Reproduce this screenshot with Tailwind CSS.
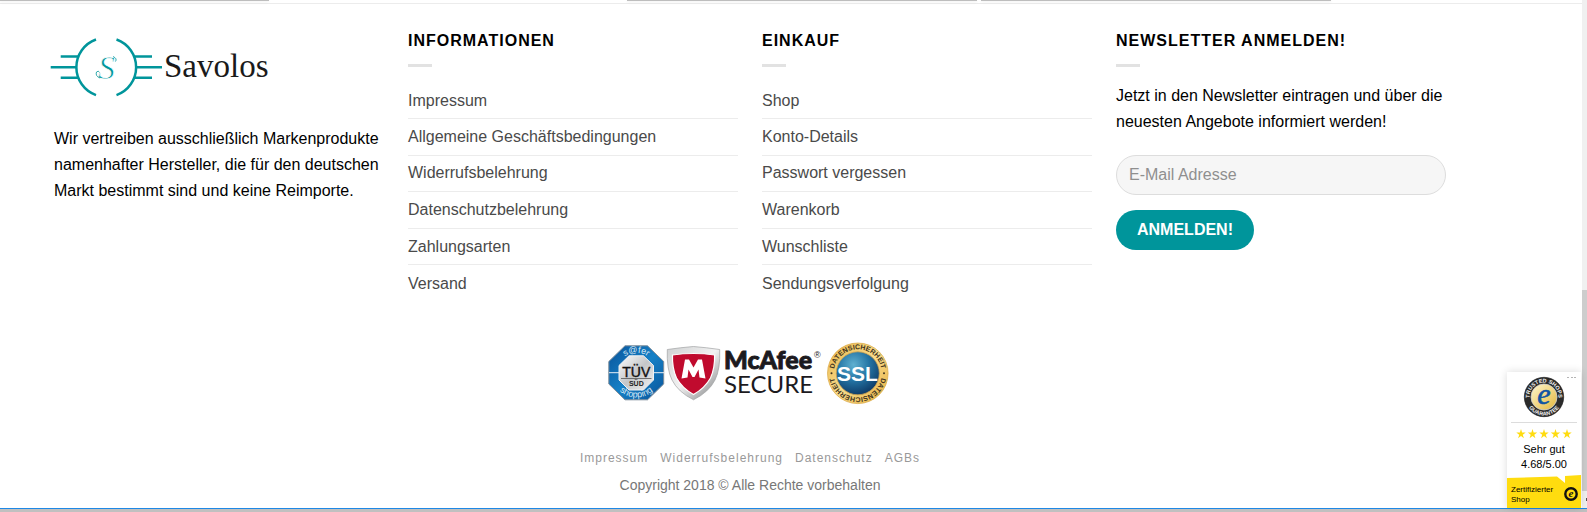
<!DOCTYPE html>
<html lang="de">
<head>
  <meta charset="UTF-8" />
  <title>Savolos</title>
  <meta name="viewport" content="width=device-width, initial-scale=1.0" />
  <script src="https://cdn.jsdelivr.net/npm/@tailwindcss/browser@4"></script>
</head>
<body class="bg-white font-['Liberation_Sans',Arial,sans-serif] text-base text-black">

  <div class="relative flex">
    <div class="min-w-0 flex-1">

      <!-- lower edges of the product cards -->
      <div class="flex h-[3px] gap-1">
        <div class="h-px flex-[269] bg-[#bdbdbd] shadow-sm"></div>
        <div class="flex-[350]"></div>
        <div class="h-px flex-[350] bg-[#bdbdbd] shadow-sm"></div>
        <div class="h-px flex-[350] bg-[#bdbdbd] shadow-sm"></div>
        <div class="flex-[247]"></div>
      </div>

      <footer class="border-t border-[#ececec] pt-6 pr-[136px] pb-[11px] pl-[54px]">
        <div class="grid grid-cols-4 gap-6">

          <div class="pt-2">
            <a href="#" aria-label="Savolos" class="-ml-1 block">
              <svg width="220" height="62" viewBox="50 36 220 62" fill="none">
                <g stroke="#00959b" stroke-width="2.5">
                  <path d="M96 39.5A29.5 29.5 0 0 0 96 95.1" />
                  <path d="M116.500 39.500A29.500 29.500 0 0 1 116.500 95.100" />
                  <path d="M60.700 56.500H79M50.700 67.300H77M60.700 77.700H79M134 56.500H152M136 67.300H162M134 77.700H152" />
                </g>
                <text x="98" y="79" font-family="Liberation Serif, serif" font-style="italic" font-size="34" fill="#00959b" stroke="#fff" stroke-width=".8">S</text>
                <path d="M113 56.500Q117.500 58.500 115.500 61.500M100 78Q95 76 96.500 72Q98.500 70 99.500 72.500" stroke="#00959b" stroke-width=".8" />
                <text x="164" y="77" font-family="Liberation Serif, serif" font-size="33" fill="#1a1a1a">Savolos</text>
              </svg>
            </a>
            <p class="mt-7 leading-[26px]">Wir vertreiben ausschließlich Markenprodukte namenhafter Hersteller, die für den deutschen Markt bestimmt sind und keine Reimporte.</p>
          </div>

          <div>
            <h2 class="font-bold leading-[26px] tracking-[1px]">INFORMATIONEN</h2>
            <div class="mt-2.5 h-[3px] w-6 bg-[#e2e2e2]"></div>
            <ul class="mt-4 grid h-[219px] grid-rows-[36px_repeat(5,1fr)] divide-y divide-[#ececec] text-[#4a4a4a] [&>li]:flex [&>li]:items-center">
              <li><a href="#">Impressum</a></li>
              <li><a href="#">Allgemeine Geschäftsbedingungen</a></li>
              <li><a href="#">Widerrufsbelehrung</a></li>
              <li><a href="#">Datenschutzbelehrung</a></li>
              <li><a href="#">Zahlungsarten</a></li>
              <li><a href="#">Versand</a></li>
            </ul>
          </div>

          <div>
            <h2 class="font-bold leading-[26px] tracking-[1px]">EINKAUF</h2>
            <div class="mt-2.5 h-[3px] w-6 bg-[#e2e2e2]"></div>
            <ul class="mt-4 grid h-[219px] grid-rows-[36px_repeat(5,1fr)] divide-y divide-[#ececec] text-[#4a4a4a] [&>li]:flex [&>li]:items-center">
              <li><a href="#">Shop</a></li>
              <li><a href="#">Konto-Details</a></li>
              <li><a href="#">Passwort vergessen</a></li>
              <li><a href="#">Warenkorb</a></li>
              <li><a href="#">Wunschliste</a></li>
              <li><a href="#">Sendungsverfolgung</a></li>
            </ul>
          </div>

          <div>
            <h2 class="font-bold leading-[26px] tracking-[1px]">NEWSLETTER ANMELDEN!</h2>
            <div class="mt-2.5 h-[3px] w-6 bg-[#e2e2e2]"></div>
            <p class="mt-4 leading-[26px]">Jetzt in den Newsletter eintragen und über die neuesten Angebote informiert werden!</p>
            <form class="mt-5">
              <input type="email" aria-label="E-Mail Adresse" placeholder="E-Mail Adresse" class="block h-10 w-full rounded-full border border-[#dddddd] bg-[#f6f6f6] px-3 placeholder:text-[#8f8f8f]" />
              <button type="submit" class="mt-[15px] block h-10 rounded-full bg-[#00959b] px-[21px] font-bold text-white">ANMELDEN!</button>
            </form>
          </div>
        </div>

        <svg class="mx-auto mt-[39px] block" width="286" height="64" viewBox="607 341 286 64">
          <defs>
            <linearGradient id="blue" x1="0" y1="0" x2="1" y2="1">
              <stop offset="0" stop-color="#0a5399" />
              <stop offset=".5" stop-color="#1580c6" />
              <stop offset="1" stop-color="#0a5399" />
            </linearGradient>
            <linearGradient id="silver" x1="0" y1="0" x2="1" y2="1">
              <stop offset="0" stop-color="#fdfdfd" />
              <stop offset=".5" stop-color="#c4c6c8" />
              <stop offset="1" stop-color="#f4f4f4" />
            </linearGradient>
            <linearGradient id="steel" x1="0" y1="0" x2="1" y2="1">
              <stop offset="0" stop-color="#cfd1d2" />
              <stop offset=".5" stop-color="#f2f2f2" />
              <stop offset="1" stop-color="#77797b" />
            </linearGradient>
            <linearGradient id="gold" x1="0" y1="0" x2="1" y2="1">
              <stop offset="0" stop-color="#e9b548" />
              <stop offset=".5" stop-color="#f8dc8c" />
              <stop offset="1" stop-color="#e5ad3d" />
            </linearGradient>
            <radialGradient id="ball" cx=".4" cy=".3" r=".75">
              <stop offset="0" stop-color="#5fb0d0" />
              <stop offset=".5" stop-color="#2373a3" />
              <stop offset="1" stop-color="#0c3561" />
            </radialGradient>
            <path id="tuvTop" d="M616.300 372.700A20 20 0 0 1 656.300 372.700" />
            <path id="tuvBottom" d="M611.500 372.700A24.800 24.800 0 0 0 661.100 372.700" />
            <path id="sslTop" d="M833.800 373.300A24 24 0 0 1 881.800 373.300" />
            <path id="sslBottom" d="M881.800 373.300A24 24 0 0 1 833.800 373.300" />
          </defs>

          <!-- TÜV SÜD -->
          <path d="M625 345.800H647.500L663.700 361.500V384L647.500 399.800H625L608.800 384V361.500Z" fill="url(#blue)" stroke="#7f8d99" stroke-width="1" />
          <path d="M609 372.700H664" stroke="#e6eef5" stroke-width="1" />
          <path d="M629 355.800H643.500L653.500 365.500V380L643.500 390H629L619 380V365.500Z" fill="url(#silver)" stroke="#eef1f4" stroke-width="1" />
          <text x="636.300" y="376.500" text-anchor="middle" font-family="Liberation Sans" font-size="14" fill="#111" stroke="#111" stroke-width=".4">TÜV</text>
          <path d="M621 378.500H651.500" stroke="#555" stroke-width=".8" />
          <text x="636.300" y="386" text-anchor="middle" font-family="Liberation Sans" font-weight="bold" font-size="7" fill="#222">SÜD</text>
          <g font-family="Liberation Sans" font-size="9" fill="#d5e8f6" text-anchor="middle">
            <text><textPath href="#tuvTop" startOffset="50%">s@fer</textPath></text>
            <text><textPath href="#tuvBottom" startOffset="50%">shopping</textPath></text>
          </g>

          <!-- McAfee SECURE -->
          <path d="M667.300 349.500Q681 347.500 693.500 346.500Q706 347.500 719.700 349.500Q720.500 369 715 380Q709 392 693.500 399.800Q678 392 672 380Q666.500 369 667.300 349.500Z" fill="url(#steel)" stroke="#a0a2a4" stroke-width=".7" />
          <path d="M672.500 355Q682 353.500 693.500 353.500Q705 353.500 714.600 355Q715 368 710.500 378Q705 388 693.500 394.500Q682 388 676.500 378Q672 368 672.500 355Z" fill="#c00b2e" stroke="#fff" stroke-width="1.200" />
          <path d="M681.500 378.500L685 359.500L689 359.500L693.500 367.500L698 359.500L702 359.500L705.500 378.500L699.500 377.500L698.500 369.500L694.500 377H692.500L688.500 369.500L687.500 377.500Z" fill="#fff" />
          <text x="724" y="369" font-family="Lato, sans-serif" font-weight="900" font-size="25" fill="#1c1a1e" stroke="#1c1a1e" stroke-width=".9">McAfee</text>
          <text x="814" y="358" font-family="Liberation Sans" font-size="9" fill="#1c1a1e">®</text>
          <text x="724" y="393" font-family="Lato, sans-serif" font-size="24" fill="#1c1a1e">SECURE</text>

          <!-- SSL -->
          <circle cx="857.800" cy="373.300" r="30.300" fill="url(#gold)" stroke="#d9a640" stroke-width=".7" />
          <circle cx="857.800" cy="373.300" r="21.500" fill="url(#ball)" stroke="#c9a050" stroke-width=".8" />
          <g font-family="Liberation Sans" font-weight="bold" font-size="7" fill="#3f3420" text-anchor="middle">
            <text><textPath href="#sslTop" startOffset="50%">DATENSICHERHEIT</textPath></text>
            <text><textPath href="#sslBottom" startOffset="50%">DATENSICHERHEIT</textPath></text>
          </g>
          <circle cx="831.500" cy="373.300" r="1" fill="#3f3420" />
          <circle cx="884" cy="373.300" r="1" fill="#3f3420" />
          <text x="857.500" y="380.800" text-anchor="middle" font-family="Liberation Sans" font-weight="bold" font-size="21" fill="#fff">SSL</text>
        </svg>

        <nav class="mt-11 flex justify-center gap-3 text-xs leading-[18px] tracking-[1px] text-[#999999]">
          <a href="#">Impressum</a>
          <a href="#">Widerrufsbelehrung</a>
          <a href="#">Datenschutz</a>
          <a href="#">AGBs</a>
        </nav>
        <p class="mt-1.5 text-center text-sm leading-6 text-[#777777]">Copyright 2018 © Alle Rechte vorbehalten</p>
      </footer>
    </div>

    <!-- scrollbar -->
    <div class="flex w-[5px] flex-col bg-[#f0f0f0]">
      <div class="flex-[290]"></div>
      <div class="flex-[201] bg-[#cdcdcd]"></div>
      <div class="flex flex-[17] items-center justify-end"><span class="h-[3px] w-px bg-[#505050]"></span></div>
    </div>

    <!-- Trusted Shops badge -->
    <aside class="absolute right-[6px] bottom-0 flex h-[136px] w-[74px] flex-col bg-white shadow-[0_0_8px_rgba(0,0,0,0.15)]">
      <svg class="shrink-0" width="74" height="50" viewBox="0 0 74 50">
        <defs>
          <linearGradient id="seal" x1="0" y1="0" x2="1" y2="1">
            <stop offset="0" stop-color="#fff6cf" />
            <stop offset="1" stop-color="#e3b73c" />
          </linearGradient>
          <path id="sealTop" d="M23.400 30A14.500 14.500 0 1 1 50.600 30" />
          <path id="sealBottom" d="M18.500 25A18.500 18.500 0 0 0 55.500 25" />
        </defs>
        <g fill="#b5b5b5">
          <rect x="60" y="5" width="2" height="1" /><rect x="64" y="5" width="2" height="1" /><rect x="67" y="5" width="2" height="1" />
        </g>
        <circle cx="37" cy="25" r="19.700" fill="#2b2b2b" stroke="#111" stroke-width=".6" />
        <circle cx="37" cy="25" r="13" fill="url(#seal)" stroke="#cfcfcf" stroke-width=".8" />
        <g font-family="Liberation Sans" font-weight="bold" font-size="5.500" fill="#f2f2f2" text-anchor="middle">
          <text><textPath href="#sealTop" startOffset="50%">TRUSTED SHOPS</textPath></text>
          <text><textPath href="#sealBottom" startOffset="50%">GUARANTEE</textPath></text>
        </g>
        <text x="37" y="32" text-anchor="middle" font-family="Liberation Serif" font-style="italic" font-size="30" fill="#1054a3" stroke="#1054a3" stroke-width=".6">e</text>
      </svg>
      <div class="mx-1 h-px shrink-0 bg-[#dcdcdc]"></div>
      <svg class="mx-auto mt-[5px] shrink-0" width="56" height="12" viewBox="0 0 56 12" fill="#ffdc0f">
        <defs><path id="star" d="M5 1L6.100 4.600H9.700L6.800 6.700L7.900 10.200L5 8L2.100 10.200L3.200 6.700L.3 4.600H3.900Z" /></defs>
        <use href="#star" x="0" /><use href="#star" x="11.500" /><use href="#star" x="23" /><use href="#star" x="34.500" /><use href="#star" x="46" />
      </svg>
      <p class="mt-0.5 text-center text-[11px] leading-[15px]">Sehr gut<br />4.68/5.00</p>
      <div class="relative mt-auto flex h-[33px] shrink-0 items-end justify-between pr-[3px] pb-[3px] pl-1">
        <svg class="absolute inset-0 h-full w-full" viewBox="0 0 74 33" preserveAspectRatio="none"><path d="M0 3L50 1.500L58 8V1L74 0V33H0Z" fill="#ffdc0f" /></svg>
        <span class="relative text-[8px] leading-[10px]">Zertifizierter<br />Shop</span>
        <svg class="relative mb-1 shrink-0" width="14" height="14" viewBox="0 0 14 14">
          <circle cx="7" cy="7" r="5.700" fill="#ffdc0f" stroke="#111" stroke-width="2.400" />
          <text x="7" y="10" text-anchor="middle" font-family="Liberation Serif" font-weight="bold" font-style="italic" font-size="11" fill="#111">e</text>
        </svg>
      </div>
    </aside>
  </div>

  <div class="h-1 border-t border-[#1e88e5] bg-[#c0c0c0]"></div>

</body>
</html>
